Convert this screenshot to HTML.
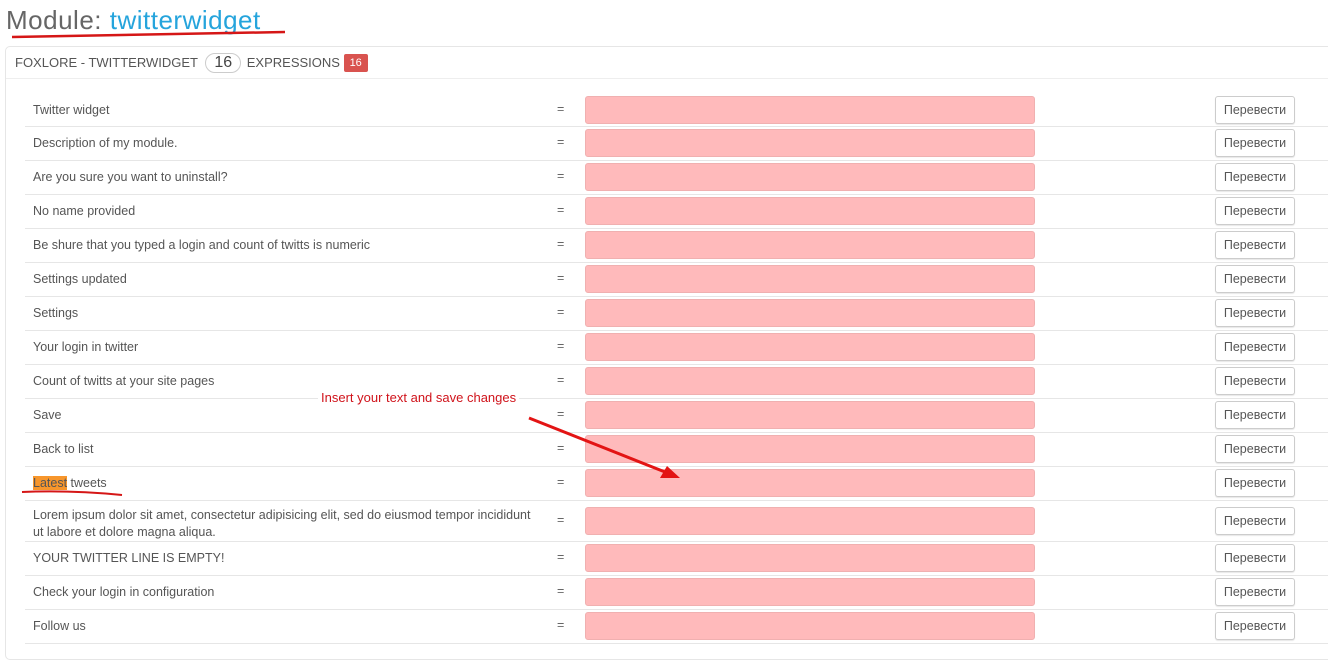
<!DOCTYPE html>
<html><head><meta charset="utf-8"><style>
*{box-sizing:border-box;margin:0;padding:0}
body{width:1328px;height:662px;background:#fff;font-family:"Liberation Sans","DejaVu Sans",sans-serif;color:#555;position:relative;overflow:hidden;font-size:12.5px}
.a{position:absolute}
.h1{left:6px;top:5px;font-size:26px;color:#666;white-space:nowrap;letter-spacing:0.5px}
.h1 span{color:#25a4dc}
.panel{left:5px;top:46px;width:1340px;height:614px;border:1px solid #e6e6e6;border-radius:5px}
.hdr{left:15px;top:53px;font-size:13px;color:#555;white-space:nowrap}
.hline{left:6px;top:78px;width:1330px;height:1px;background:#eee}
.lbl{left:33px;white-space:nowrap;color:#555}
.eq{left:557px;color:#666}
.inp{left:585px;width:450px;height:28px;background:#ffbabb;border:1px solid #f0b0b0;border-radius:3px}
.btn{left:1215px;width:80px;height:28px;border:1px solid #ccc;border-radius:3px;background:#fff;box-shadow:0 1px 1px rgba(0,0,0,.1);text-align:center;line-height:26px;color:#555;font-size:12.5px}
.sep{left:25px;width:1310px;height:1px;background:#e6e6e6}
</style></head><body>
<div class="a h1">Module: <span>twitterwidget</span></div>
<div class="a panel"></div>
<div class="a hdr">FOXLORE - TWITTERWIDGET <span style="display:inline-block;border:1px solid #ccc;border-radius:10px;padding:0 8px;font-size:16px;line-height:18px;color:#444;margin:0 2px 0 4px">16</span> EXPRESSIONS <span style="display:inline-block;background:#d9534f;color:#fff;font-size:11px;line-height:18px;padding:0 6px;border-radius:2px;vertical-align:1px">16</span></div>
<div class="a hline"></div>
<div id="rows"></div>
<svg class="a" style="left:0;top:0" width="1328" height="662">
<path d="M12 37 Q150 34 285 32" stroke="#d51616" stroke-width="2.5" fill="none"/>
<path d="M22 492 Q70 490 122 495" stroke="#d51616" stroke-width="2" fill="none"/>
<line x1="529" y1="418" x2="665" y2="472" stroke="#e31414" stroke-width="3"/>
<polygon points="680,478 660,478 667,466" fill="#e31414"/>
</svg>
<script>
var r=[["Twitter widget",93,126],["Description of my module.",126,160],["Are you sure you want to uninstall?",160,194],["No name provided",194,228],["Be shure that you typed a login and count of twitts is numeric",228,262],["Settings updated",262,296],["Settings",296,330],["Your login in twitter",330,364],["Count of twitts at your site pages",364,398],["Save",398,432],["Back to list",432,466],["<span style='background:#f7962c'>Latest</span> tweets",466,500],["Lorem ipsum dolor sit amet, consectetur adipisicing elit, sed do eiusmod tempor incididunt<br>ut labore et dolore magna aliqua.",500,541],["YOUR TWITTER LINE IS EMPTY!",541,575],["Check your login in configuration",575,609],["Follow us",609,643]];
var h="";
r.forEach(function(x){var c=(x[1]+x[2])/2;
var lines=x[0].indexOf("<br>")>0;
h+='<div class="a lbl" style="top:'+(lines?c-14:c-8)+'px;line-height:'+(lines?'17px':'16px')+'">'+x[0]+'</div>';
h+='<div class="a eq" style="top:'+(c-8)+'px">=</div>';
h+='<div class="a inp" style="top:'+(c-14)+'px"></div>';
h+='<div class="a btn" style="top:'+(c-14)+'px">Перевести</div>';
h+='<div class="a sep" style="top:'+x[2]+'px"></div>';});
h+='<div class="a" style="left:318px;top:390px;background:#fff;color:#d0131b;font-size:13px;padding:0 3px;white-space:nowrap">Insert your text and save changes</div>';
document.getElementById("rows").innerHTML=h;
</script>
</body></html>
